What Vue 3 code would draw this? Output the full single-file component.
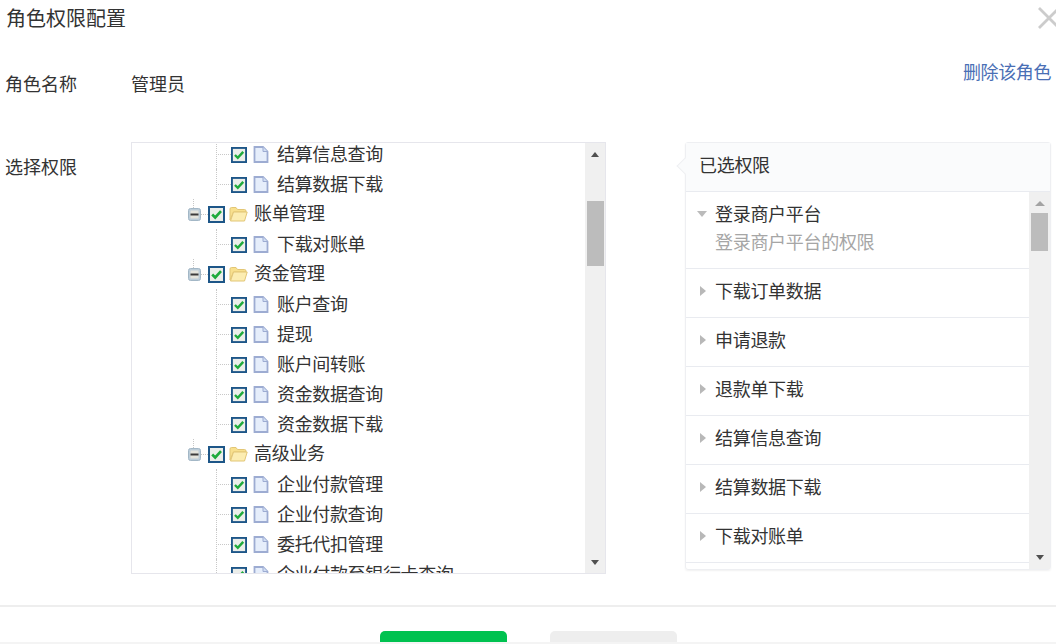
<script setup>
const rows = [
  { t: '结算信息查询' }, { t: '结算数据下载' },
  { t: '账单管理', folder: true }, { t: '下载对账单' },
  { t: '资金管理', folder: true }, { t: '账户查询' }, { t: '提现' }, { t: '账户间转账' }, { t: '资金数据查询' }, { t: '资金数据下载' },
  { t: '高级业务', folder: true }, { t: '企业付款管理' }, { t: '企业付款查询' }, { t: '委托代扣管理' }, { t: '企业付款至银行卡查询' }
]
const picked = ['下载订单数据', '申请退款', '退款单下载', '结算信息查询', '结算数据下载', '下载对账单']
</script>

<template>
  <div class="page">
    <header class="head">
      <h1 class="title">角色权限配置</h1>
      <svg class="close" width="22" height="22" viewBox="0 0 22 22"><path d="M1 1L21 21M21 1L1 21" stroke="#ccc" stroke-width="2.8" fill="none" /></svg>
    </header>

    <div class="name-row">
      <span class="label">角色名称</span>
      <span class="name">管理员</span>
      <a class="del">删除该角色</a>
    </div>

    <div class="perm-row">
      <span class="label perm-label">选择权限</span>

      <div class="tree-box">
        <ul class="tree">
          <li v-for="r in rows" :key="r.t" class="node" :class="{ parent: r.folder }">
            <template v-if="r.folder">
              <span class="stub"></span>
              <svg class="toggle" width="13" height="13" viewBox="0 0 13 13">
                <rect x="0.5" y="0.5" width="12" height="12" rx="2" fill="#bccdd9" stroke="#a3b7c6" />
                <rect x="2.5" y="2.5" width="8" height="8" fill="#e4e4dc" />
                <rect x="2.5" y="5.5" width="8" height="2" fill="#3c3c3c" />
              </svg>
              <span class="dash"></span>
            </template>
            <template v-else>
              <span class="vline"></span>
              <span class="hline"></span>
            </template>
            <svg class="check" :class="{ small: !r.folder }" viewBox="0 0 17 17">
              <rect x="1" y="1" width="15" height="15" fill="#eceeea" stroke="#1d5688" stroke-width="2" />
              <path d="M4.2 8.5L7.2 11.5L13 5.2" stroke="#1faa3c" stroke-width="2.6" fill="none" />
            </svg>
            <svg v-if="r.folder" class="folder" width="19" height="16" viewBox="0 0 19 16">
              <path d="M1 14V3Q1 1.5 2.5 1.5H7L8.5 3.5H15.5Q17 3.5 17 5V6H4.5L1 14Z" fill="#f8e08e" stroke="#e2c676" />
              <path d="M4.5 6H18.2L15.5 15H1.5Z" fill="#fcedb2" stroke="#e2c676" />
            </svg>
            <svg v-else class="file" width="16" height="17" viewBox="0 0 16 17">
              <path d="M1.5 1H10L14.5 5.5V16H1.5Z" fill="#e6eefb" stroke="#9dacd2" stroke-width="1.8" />
              <path d="M10 1V5.5H14.5" fill="#d2def3" stroke="#9dacd2" />
            </svg>
            <span class="node-text">{{ r.t }}</span>
          </li>
        </ul>
        <div class="bar">
          <span class="up dark"></span>
          <span class="spacer s1"></span>
          <span class="thumb t1"></span>
          <span class="fill"></span>
          <span class="down dark"></span>
        </div>
      </div>

      <div class="panel">
        <span class="tip"></span>
        <div class="panel-head">已选权限</div>
        <div class="panel-body">
          <div class="list">
            <div class="item open">
              <span class="tri-down"></span>
              <div>
                <div class="item-title">登录商户平台</div>
                <div class="item-desc">登录商户平台的权限</div>
              </div>
            </div>
            <div v-for="p in picked" :key="p" class="item">
              <span class="tri-right"></span>
              <div class="item-title">{{ p }}</div>
            </div>
          </div>
          <div class="bar bar2">
            <span class="up grey"></span>
            <span class="spacer s2"></span>
            <span class="thumb t2"></span>
            <span class="fill"></span>
            <span class="down dark"></span>
          </div>
        </div>
      </div>
    </div>

    <footer class="foot">
      <button class="btn ok"></button>
      <button class="btn cancel"></button>
    </footer>
    <span class="edge"></span>
  </div>
</template>

<style>
html, body { margin: 0; background: #fff; overflow: hidden; }
</style>

<style scoped>
.page {
  width: 1056px;
  height: 644px;
  overflow: hidden;
  position: relative;
  background: #fff;
  color: #333;
  font-family: "Noto Sans CJK SC", "Liberation Sans", sans-serif;
  font-size: 18px;
}
.head {
  height: 38px;
  display: flex;
  justify-content: space-between;
  align-items: center;
  padding-left: 6px;
}
.title { margin: -2px 0 0; font-size: 20px; font-weight: 400; line-height: 38px; }
.close { margin-right: -4px; margin-top: -3px; flex: none; }
.name-row {
  height: 104px;
  display: flex;
  align-items: flex-start;
  padding-left: 6px;
  line-height: 26px;
}
.label { width: 126px; margin-left: -1px; flex: none; }
.name-row .label, .name { margin-top: 32px; }
.del { margin-left: auto; margin-right: 5px; margin-top: 20px; color: #4a6fb5; letter-spacing: -0.4px; }
.perm-row { display: flex; align-items: flex-start; padding-left: 6px; height: 465px; border-bottom: 2px solid #eeeeee; box-sizing: border-box; }
.perm-label { margin-top: 11px; }
.tree-box {
  width: 475px;
  height: 432px;
  box-sizing: border-box;
  border: 1px solid #e6e6ec;
  display: flex;
  overflow: hidden;
  flex: none;
}
.tree { list-style: none; margin: -4px 0 0; padding: 0; flex: 1; min-width: 0; }
.node {
  height: 30px;
  display: flex;
  align-items: center;
  padding-left: 84px;
  position: relative;
  white-space: nowrap;
}
.node.parent { padding-left: 56px; }
.vline {
  position: absolute;
  left: 84px;
  top: 0;
  bottom: 0;
  border-left: 1px dotted #c8c8c8;
}
.hline { width: 15px; border-top: 1px dotted #c8c8c8; flex: none; }
.stub { position: absolute; left: 61px; top: 0; height: 9px; border-left: 1px dotted #c8c8c8; }
.toggle { flex: none; }
.dash { width: 7px; border-top: 1px dotted #c8c8c8; flex: none; }
.check { flex: none; width: 17px; height: 17px; margin-top: 1px; }
.check.small { width: 16px; height: 16px; margin-top: 2px; }
.folder { margin-left: 4px; margin-right: 6px; flex: none; }
.file { margin-left: 6px; margin-right: 8px; margin-top: 1px; flex: none; }
.node-text { line-height: 26px; transform: translateY(-1px); letter-spacing: -0.35px; }
.parent .node-text { transform: translateY(-2px); }
.bar {
  width: 20px;
  flex: none;
  background: #f0f0f0;
  display: flex;
  flex-direction: column;
  align-items: center;
  height: 100%;
  box-sizing: border-box;
  padding: 9px 0 8px;
}
.up, .down { width: 0; height: 0; border-left: 4.5px solid transparent; border-right: 4.5px solid transparent; flex: none; }
.up.dark { border-bottom: 5px solid #505050; }
.up.grey { border-left-width: 5px; border-right-width: 5px; border-bottom: 5px solid #a3a3a3; }
.down.dark { border-top: 5px solid #505050; }
.spacer { flex: none; }
.s1 { height: 44px; }
.s2 { height: 7px; }
.thumb { width: 17px; background: #bcbcbc; flex: none; }
.t1 { height: 65px; }
.t2 { height: 38px; }
.fill { flex: 1; }
.panel {
  margin-left: 79px;
  width: 366px;
  height: 428px;
  flex: none;
  box-sizing: border-box;
  border: 1px solid #eeeff2;
  border-radius: 3px;
  box-shadow: 0 1px 2px rgba(0, 0, 0, 0.06);
  position: relative;
  display: flex;
  flex-direction: column;
}
.tip {
  position: absolute;
  left: -7px;
  top: 17px;
  width: 12px;
  height: 12px;
  transform: rotate(45deg);
  background: #fafbfc;
  border-left: 1px solid #eeeff2;
  border-bottom: 1px solid #eeeff2;
  box-sizing: border-box;
}
.panel-head {
  height: 49px;
  flex: none;
  box-sizing: border-box;
  background: #fafbfc;
  border-bottom: 1px solid #e9ebf0;
  padding-left: 13px;
  line-height: 43px;
  position: relative;
  letter-spacing: -0.3px;
}
.panel-body { flex: 1; min-height: 0; display: flex; overflow: hidden; }
.list { flex: 1; min-width: 0; letter-spacing: -0.3px; }
.item {
  display: flex;
  align-items: flex-start;
  height: 49px;
  box-sizing: border-box;
  border-bottom: 1px solid #e9ebf0;
  padding-left: 13px;
  line-height: 28px;
  padding-top: 7px;
}
.item.open { height: 77px; padding-top: 7px; }
.tri-right {
  width: 0; height: 0;
  border-top: 5px solid transparent;
  border-bottom: 5px solid transparent;
  border-left: 6px solid #b8b8b8;
  margin: 10px 9px 0 1px;
  flex: none;
}
.tri-down {
  width: 0; height: 0;
  border-left: 5.5px solid transparent;
  border-right: 5.5px solid transparent;
  border-top: 6px solid #bbb;
  margin: 12px 8px 0 -2px;
  flex: none;
}
.item-desc { color: #a6a6a6; }
.bar2 { width: 21px; padding-top: 9px; padding-bottom: 9px; }
.foot {
  display: flex;
  padding: 24px 0 0 380px;
  gap: 43px;
}
.btn { width: 127px; height: 40px; border: 0; border-radius: 5px; padding: 0; flex: none; }
.ok { background: #00c250; }
.cancel { background: #eeeeee; }
.edge { position: absolute; left: 0; right: 0; bottom: 0; height: 2px; background: #f4f4f4; }
</style>
